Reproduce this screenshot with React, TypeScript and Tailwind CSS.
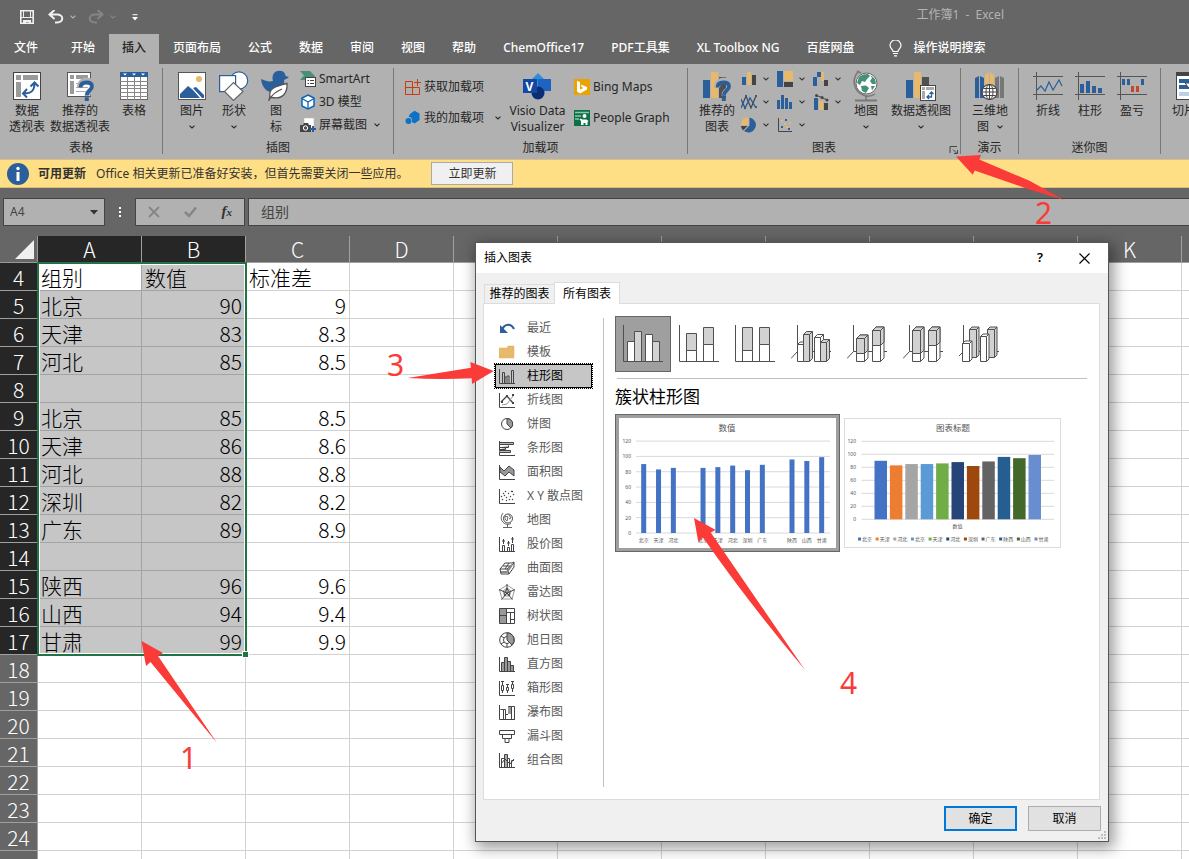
import React from "react";

const INK = "#444";
const BLUE = "#2b5f9b";
const GOLD = "#e6b96c";

/* ---------- shared pieces ---------- */

function Chevron({ className = "" }: { className?: string }) {
  return (
    <svg className={className} width="6" height="4" viewBox="0 0 6 4" fill="none" stroke="currentColor" strokeWidth="1.1">
      <path d="M.5 .7 L3 3 L5.500 .7" />
    </svg>
  );
}

function Art({ w, h, children }: { w: number; h: number; children: React.ReactNode }) {
  return (
    <svg width={w} height={h} viewBox={`0 0 ${w} ${h}`} fill="none" className="shrink-0">
      {children}
    </svg>
  );
}

function BigButton({
  icon,
  lines,
  width,
  chevron = false,
}: {
  icon: React.ReactNode;
  lines: React.ReactNode[];
  width: string;
  chevron?: boolean;
}) {
  return (
    <button type="button" className={`flex shrink-0 flex-col items-center text-[#262626] ${width}`}>
      <span className="mb-px flex h-8 items-center justify-center">{icon}</span>
      {lines.map((l, i) => (
        <span key={i} className="flex h-4 items-center whitespace-nowrap leading-4">
          {l}
        </span>
      ))}
      {chevron && <Chevron className="mt-1.5" />}
    </button>
  );
}

function SmallButton({ icon, label, chevron }: { icon: React.ReactNode; label: string; chevron?: string }) {
  return (
    <button type="button" className="flex items-center gap-[3px] whitespace-nowrap text-[#262626]">
      {icon}
      <span>{label}</span>
      {chevron && <Chevron className={chevron} />}
    </button>
  );
}

function Group({
  label,
  width,
  children,
  pad = "",
  launcher = false,
}: {
  label: string;
  width: string;
  children: React.ReactNode;
  pad?: string;
  launcher?: boolean;
}) {
  return (
    <section aria-label={label || undefined} className={`flex shrink-0 pt-1 pb-[3px] ${width}`}>
      <div className="flex min-w-0 flex-1 flex-col">
        <div className={`flex flex-1 pt-0.5 ${pad}`}>{children}</div>
        <div className="relative flex h-4 items-center justify-center leading-4 text-[#262626]">
          {label}
          {launcher && (
            <button type="button" aria-label="图表选项" className="absolute right-0.5 bottom-0.5">
              <Art w={9} h={9}>
                <path d="M1 8 V1.500 H8 M4 4.500 L8 8.500 M8.500 5 V8.500 H5" stroke={INK} />
              </Art>
            </button>
          )}
        </div>
      </div>
      <div className="mb-0.5 w-px bg-[#777]" />
    </section>
  );
}

/* ---------- ribbon artwork ---------- */

function HelpMark() {
  return (
    <g>
      <path d="M15 16.500 C15 11 19 9.500 22 9.500 C26 9.500 28 12 28 15 C28 20 22.500 19.500 22.500 24.500" stroke="#b1b1b1" strokeWidth="6" />
      <path d="M15.500 16.500 C15.500 12.500 18.500 11.500 21.500 11.500 C25 11.500 27 13 27 15.500 C27 19.500 21.800 20 21.800 24.500" stroke={BLUE} strokeWidth="3.800" />
      <rect x="19.800" y="26.200" width="4" height="3.800" fill={BLUE} />
    </g>
  );
}

const PivotIcon = (
  <Art w={28} h={28}>
    <rect x=".5" y=".5" width="27" height="27" fill="#fff" stroke={INK} />
    <path d="M3 3h5v5H3zM10 3h15v5H10zM3 10h5v15H3z" fill="#9a9a9a" />
    <path d="M11 21.500 C19 21.500 21.500 18 21.500 11.500 M17.500 14.500 L21.500 10.500 L25.500 14.500 M14 17 L10 21.500 L14 25.500" stroke={BLUE} strokeWidth="2" />
  </Art>
);

const RecPivotIcon = (
  <Art w={30} h={30}>
    <rect x="2.500" y="1.500" width="23" height="24" fill="#fff" stroke="#555" />
    <path d="M5 4h4v4H5zM11 4h12v4H11zM5 10h4v13H5z" fill="#9a9a9a" />
    <path d="M11 12.500H23M11 16.500H23M11 20.500H23" stroke="#aaa" />
    <HelpMark />
  </Art>
);

const TableIcon = (
  <Art w={28} h={28}>
    <rect x=".5" y=".5" width="27" height="27" fill="#fff" stroke="#666" />
    <rect width="28" height="5" fill={BLUE} />
    <path d="M3 1.500h4l-2 2zM12 1.500h4l-2 2zM21 1.500h4l-2 2z" fill="#fff" />
    <path d="M0 9.500H28M0 13.500H28M0 16.500H28M0 20.500H28M0 24.500H28M7.500 5V28M14.500 5V28M20.500 5V28" stroke="#888" />
  </Art>
);

const PictureIcon = (
  <Art w={28} h={28}>
    <rect x=".5" y=".5" width="27" height="27" fill="#fff" stroke="#555" />
    <circle cx="21" cy="7" r="3" fill={GOLD} />
    <path d="M2 26 V22 L10 14 L15 18 L22 26z M15 16 L18 15 L26 23 V26 H24z" fill={BLUE} />
  </Art>
);

const ShapesIcon = (
  <Art w={30} h={30}>
    <circle cx="20" cy="9.500" r="8.700" fill="#fff" stroke={BLUE} strokeWidth="1.200" />
    <rect x=".6" y="4.600" width="16" height="16" fill="#fff" stroke={BLUE} strokeWidth="1.200" />
    <path d="M14.500 11.500 L24 20.500 L14.500 29.500 L5.500 20.500z" fill="#fff" stroke="#666" strokeWidth="1.200" />
  </Art>
);

const DuckIcon = (
  <Art w={30} h={32}>
    <path d="M0 9 C5 11 8 12 12 11 C11 8 11 1 18.500 .8 C23 .6 24.500 4 24.500 6 L28 7 C26 9 24 9 23 10 C24 13 22 20 15 22 C8 24 1 19 0 9z" fill={BLUE} />
    <path d="M8 31 C8 27 10 25 12 24" stroke="#555" strokeWidth="1.300" />
    <path d="M9 27 C7 19 14 16 26 13.500 C26.500 21 23 30 11 27.500z" fill="#fff" stroke="#555" strokeWidth="1.300" />
    <path d="M9 29 C12 23 16 21 21 19" stroke="#555" strokeWidth="1.200" />
  </Art>
);

const SmartArtIcon = (
  <Art w={16} h={16}>
    <path d="M0 0H10L15 5L12 9H0L4 4.500z" fill="#4a8f78" />
    <rect x="5.500" y="6.500" width="10" height="9" fill="#fff" stroke={INK} />
    <path d="M7.500 9.500H9M7.500 12.500H9M10 9.500H14M10 12.500H14" stroke={INK} />
  </Art>
);

const CubeIcon = (
  <Art w={16} h={16}>
    <path d="M8 1 L14 4 V12 L8 15 L2 12 V4z" fill="#fff" stroke="#0b66b4" strokeWidth="1.500" />
    <path d="M2 4.500 L8 8 L14 4.500 M8 8 V15" stroke="#0b66b4" strokeWidth="1.300" />
  </Art>
);

const ScreenshotIcon = (
  <Art w={16} h={16}>
    <rect x="4.500" y="1.500" width="9" height="9" fill="#fff" stroke="#fff" strokeDasharray="1 1" />
    <path d="M0 8h3l1-2h4l1 2h2v7H0z" fill={INK} />
    <circle cx="5.500" cy="11" r="2.200" stroke="#fff" fill="#555" />
    <path d="M13 9v6M10 12h6" stroke={BLUE} strokeWidth="2" />
  </Art>
);

const StoreIcon = (
  <Art w={16} h={16}>
    <path d="M.5 2.500H7.500V15.500H.5zM.5 8.500H14.500V15.500H.5M7.500 8.500V15.500M12.500 0V7M9 3.500H16" stroke="#cc3a0d" />
  </Art>
);

const MyAddinsIcon = (
  <Art w={16} h={16}>
    <path d="M5 4 L9.500 .8 L14.500 3.500 V10 L9.500 13.500 L7 12 C7.500 8 6 7 3.500 7z" fill="#0c72c6" />
    <circle cx="3.500" cy="11" r="3" fill="#0c72c6" />
  </Art>
);

const VisioIcon = (
  <Art w={29} h={28}>
    <path d="M15 1 L22 8 L15 15 L8 8z" fill="#2f8bdc" />
    <rect x="15" y="7" width="13" height="12" fill="#1e63c0" />
    <circle cx="15" cy="21" r="6.500" fill="#0a2d74" />
    <rect x="0" y="7" width="14" height="14" fill="#1447a4" />
    <text x="2.500" y="18.500" fontSize="12" fontWeight="700" fill="#fff">V</text>
  </Art>
);

const BingIcon = (
  <Art w={16} h={16}>
    <rect width="16" height="16" fill="#eaa300" />
    <path d="M3 2 L6 3 V10.500 L9.500 9 L7.500 8 L6.800 5.500 L13 8 V10.500 L6 14.500 L3 12.500z" fill="#fff" />
  </Art>
);

const PeopleIcon = (
  <Art w={16} h={16}>
    <rect width="16" height="16" fill="#0b7146" />
    <path d="M1 2.500H15M1 6H7M1 9H5" stroke="#8cc5aa" strokeWidth="1.500" />
    <circle cx="10.500" cy="6" r="2" fill="#fff" />
    <path d="M7 15V11L5.500 9.500 6.500 8.500 8.500 9.500H12.500L14.500 11 13.500 12V15H11.500V13H9.500V15z" fill="#fff" />
  </Art>
);

const RecChartIcon = (
  <Art w={30} h={30}>
    <rect x="1" y="9" width="7" height="18" fill={BLUE} />
    <rect x="9" y="1" width="7" height="26" fill={GOLD} />
    <rect x="17" y="6" width="7" height="21" fill="#505050" />
    <HelpMark />
  </Art>
);

const miniCharts: React.ReactNode[] = [
  <Art w={16} h={16}>
    <path d="M1 6h4v8H1z" fill={BLUE} />
    <path d="M6 1h4v13H6z" fill={GOLD} />
    <path d="M11 4h4v10h-4z" fill={INK} />
  </Art>,
  <Art w={16} h={16}>
    <path d="M0 0h6v16H0z" fill={BLUE} />
    <path d="M7 0h9v10H7z" fill={GOLD} />
    <path d="M7 11h9v5H7z" fill={INK} />
  </Art>,
  <Art w={16} h={16}>
    <path d="M0 6h4v-5h4v5H4v9H0z" fill={BLUE} />
    <path d="M8 1h3v9H8z" fill={GOLD} />
    <path d="M11 9h4v6h-4z" fill={INK} />
  </Art>,
  <Art w={16} h={16}>
    <path d="M0 14 L5 2 L10 14 L15 2" stroke={INK} strokeWidth="1.200" />
    <path d="M0 5 L4 14 L9 4 L12 9 L15 14" stroke={BLUE} strokeWidth="1.400" />
    <path d="M-1 12h2v2h-2zM4 1h2v2H4zM3 13h2v2H3zM14 1h2v2h-2zM14 12h2v2h-2z" fill={BLUE} />
  </Art>,
  <Art w={16} h={16}>
    <path d="M0 6h3v9H0zM4 1h3v14H4zM8 4h3v11H8zM12 8h3v7h-3z" fill={BLUE} />
  </Art>,
  <Art w={16} h={16}>
    <path d="M1 4h4v12H1z" fill={BLUE} />
    <path d="M6 7h4v9H6z" fill={GOLD} />
    <path d="M11 9h4v7h-4z" fill={INK} />
    <path d="M3.500 1.500 L9 3.500 L14 6" stroke={INK} />
    <circle cx="3.500" cy="1.500" r="1.500" fill={INK} />
    <circle cx="9" cy="3.500" r="1.500" fill={INK} />
    <circle cx="14" cy="6" r="1.500" fill={INK} />
  </Art>,
  <Art w={16} h={16}>
    <path d="M7.500 8 V0 A7.500 7.500 0 0 0 0 8z" fill={GOLD} />
    <path d="M6.500 9 H0 A7.500 7.500 0 0 0 2 13.500z" fill={INK} />
    <path d="M8.500 .5 A7.500 7.500 0 1 1 3 14 L8.500 8.500z" fill={BLUE} />
  </Art>,
  <Art w={16} h={16}>
    <path d="M1.500 1V14.500H15" stroke={INK} />
    <path d="M4 9h2v2H4zM8 2h2v2H8zM11 11h2v2h-2z" fill={BLUE} />
    <path d="M4 3h2v2H4zM7 6h2v2H7zM12 5h2v2h-2zM9 9h2v2H9z" fill={GOLD} />
  </Art>,
];

const GlobeIcon = (
  <Art w={26} h={32}>
    <circle cx="13.500" cy="13.500" r="10.500" fill="#fff" stroke="#666" />
    <path d="M6 7 L10 4.500 L15 4 L17 6 L14 9 L12 12 L9 11 L7 15 L4 13zM17 4.500 L22 9 L23 14 L19 14 L17 11 L19 8zM8 16 L13 15.500 L16 18 L13 23 L9 21zM18 16 L22 16 L19 20.500z" fill="#45907a" />
    <path d="M5 2 C-2 10 1 22 11 25.500 C15 27 19 26 22 24 M13 26 V30 M4 1 L8 3" stroke="#777" strokeWidth="1.500" />
    <path d="M2 30.500H24" stroke="#777" strokeWidth="2" />
  </Art>
);

const PivotChartIcon = (
  <Art w={30} h={30}>
    <rect x="0" y="9" width="7" height="18" fill={BLUE} />
    <rect x="8" y="1" width="7" height="26" fill={GOLD} />
    <rect x="16" y="6" width="7" height="9" fill="#505050" />
    <rect x="14.500" y="14.500" width="15" height="15" fill="#fff" stroke={INK} />
    <path d="M16 16h3v3h-3zM20 16h8v3h-8zM16 20h3v8h-3z" fill="#aaa" />
    <path d="M21 26 H25.500 V21 M23.500 23 L25.500 21 L27.500 23 M23 24 L21 26 L23 28" stroke={BLUE} strokeWidth="1.300" />
  </Art>
);

const Map3dIcon = (
  <Art w={30} h={30}>
    <path d="M0 7 L4 5 V27 H0zM5 5 L9 7 V27 H5z" fill={BLUE} />
    <path d="M10 4 L14 1 V25 H10zM15 1 L19 4 V25 H15z" fill={GOLD} />
    <path d="M20 7 L24 5 V27 H20zM25 5 L29 7 V27 H25z" fill="#777" />
    <circle cx="14.500" cy="21" r="7.500" fill="#fff" stroke={INK} strokeWidth="1.200" />
    <ellipse cx="14.500" cy="21" rx="3.500" ry="7.500" stroke={INK} />
    <path d="M14.500 13.500V28.500M7 21H22M8.500 17.500H20.500M8.500 24.500H20.500" stroke={INK} />
  </Art>
);

function SparkFrame({ children }: { children: React.ReactNode }) {
  return (
    <Art w={30} h={28}>
      <path d="M0 4.500H30M0 22.500H30M3.500 0V28" stroke="#555" />
      {children}
    </Art>
  );
}

const SlicerIcon = (
  <Art w={28} h={28}>
    <rect x=".5" y=".5" width="27" height="27" fill="#fff" stroke={INK} />
    <path d="M0 0h28v4H0z" fill={INK} />
    <path d="M3 7h22v4H3z" fill={BLUE} />
    <path d="M3 13h22v4H3z" fill={BLUE} />
    <path d="M3 20h22v4H3z" fill="#bcd0e8" />
    <path d="M9 11h16l-6 8v6l-4-2v-4z" fill="#fff" stroke={INK} />
  </Art>
);

/* ---------- title bar and tabs ---------- */

function TitleBar() {
  return (
    <header className="flex h-[34px] items-center text-[#b4b4b4]">
      <div className="flex items-center pl-5">
        <button type="button" aria-label="保存">
          <Art w={14} h={14}>
            <path d="M.8 .8H13.200V13.200H.8z" stroke="#f0f0f0" strokeWidth="1.600" />
            <path d="M1 7.500H13M3.500 1V7M10.500 1V7" stroke="#f0f0f0" />
            <path d="M3 10H11V14H9V12H6V14H3z" fill="#f0f0f0" />
          </Art>
        </button>
        <button type="button" aria-label="撤消" className="ml-3.5 flex items-center gap-1.5">
          <Art w={16} h={14}>
            <path d="M6.500 0 L1.500 4.500 L6.500 9 M2 4.500 H9 C16 4.500 16 12.500 9 12.500 H7" stroke="#f0f0f0" strokeWidth="2" />
          </Art>
          <Chevron />
        </button>
        <button type="button" aria-label="恢复" className="ml-3 flex items-center gap-1.5 text-[#858585]">
          <Art w={16} h={14}>
            <path d="M9.500 0 L14.500 4.500 L9.500 9 M14 4.500 H7 C0 4.500 0 12.500 7 12.500 H9" stroke="#858585" strokeWidth="2" />
          </Art>
          <Chevron />
        </button>
        <button type="button" aria-label="自定义快速访问工具栏" className="ml-4">
          <Art w={6} h={7}>
            <path d="M.5 .7H5.500" stroke="#fff" />
            <path d="M0 3H6L3 6.500z" fill="#fff" />
          </Art>
        </button>
      </div>
      <h1 className="mr-[185px] mb-1 ml-auto whitespace-pre">工作簿1  -  Excel</h1>
    </header>
  );
}

const tabs = ["开始", "插入", "页面布局", "公式", "数据", "审阅", "视图", "帮助", "ChemOffice17", "PDF工具集", "XL Toolbox NG", "百度网盘"];

function TabRow() {
  return (
    <nav className="flex h-[30px] gap-px whitespace-nowrap font-medium text-white">
      <button type="button" className="w-[57px] shrink-0 pb-0.5 pl-3.5 text-left">文件</button>
      {tabs.map((t) => (
        <button
          key={t}
          type="button"
          className={t === "插入" ? "shrink-0 bg-[#b1b1b1] px-[13px] pb-0.5 text-[#262626]" : "shrink-0 px-[13px] pb-0.5"}
        >
          {t}
        </button>
      ))}
      <button type="button" className="ml-5 flex items-center gap-3 pb-0.5">
        <Art w={13} h={17}>
          <path d="M4 11.500 C4 9 1 8.500 1 5.500 A5.300 5.300 0 0 1 12 5.500 C12 8.500 9 9 9 11.500z M4 13.500H9M5 15.800H8" stroke="#fff" strokeWidth="1.200" />
        </Art>
        操作说明搜索
      </button>
    </nav>
  );
}

/* ---------- ribbon ---------- */

function Ribbon() {
  return (
    <div className="flex h-[95px] shrink-0 overflow-hidden bg-[#b1b1b1]">
      <Group label="表格" width="w-[163px]" pad="pl-1">
        <BigButton width="w-[46px]" icon={PivotIcon} lines={["数据", "透视表"]} />
        <BigButton width="w-[60px]" icon={RecPivotIcon} lines={["推荐的", "数据透视表"]} />
        <BigButton width="w-12" icon={TableIcon} lines={["表格"]} />
      </Group>
      <Group label="插图" width="w-[231px]" pad="pl-2">
        <BigButton width="w-[42px]" icon={PictureIcon} lines={["图片"]} chevron />
        <BigButton width="w-[42px]" icon={ShapesIcon} lines={["形状"]} chevron />
        <BigButton width="w-[42px]" icon={DuckIcon} lines={["图", "标"]} />
        <div className="flex flex-col gap-[7px] pt-px pl-[3px] leading-4">
          <SmallButton icon={SmartArtIcon} label="SmartArt" />
          <SmallButton icon={CubeIcon} label="3D 模型" />
          <SmallButton icon={ScreenshotIcon} label="屏幕截图" chevron="ml-1" />
        </div>
      </Group>
      <Group label="加载项" width="w-[294px]" pad="pl-[11px]">
        <div className="flex w-24 flex-col gap-[15px] pt-[9px] leading-4">
          <SmallButton icon={StoreIcon} label="获取加载项" />
          <SmallButton icon={MyAddinsIcon} label="我的加载项" chevron="ml-2" />
        </div>
        <BigButton width="w-[73px]" icon={VisioIcon} lines={["Visio Data", "Visualizer"]} />
        <div className="flex flex-col gap-[15px] pt-[9px] leading-4">
          <SmallButton icon={BingIcon} label="Bing Maps" />
          <SmallButton icon={PeopleIcon} label="People Graph" />
        </div>
      </Group>
      <Group label="图表" width="w-[273px]" pad="pl-[9px]" launcher>
        <BigButton width="w-10" icon={RecChartIcon} lines={["推荐的", "图表"]} />
        <div className="grid h-min grid-cols-3 gap-x-2 gap-y-[7px] pt-px pl-1">
          {miniCharts.map((c, i) => (
            <button key={i} type="button" aria-label="插入图表" className="flex h-4 w-7 items-center justify-between text-[#333]">
              {c}
              <Chevron />
            </button>
          ))}
        </div>
        <BigButton width="w-[50px]" icon={GlobeIcon} lines={["地图"]} chevron />
        <BigButton width="w-[60px]" icon={PivotChartIcon} lines={["数据透视图"]} chevron />
      </Group>
      <Group label="演示" width="w-[58px]" pad="pl-2">
        <BigButton
          width="w-[42px]"
          icon={Map3dIcon}
          lines={[
            "三维地",
            <>
              图<Chevron className="ml-2" />
            </>,
          ]}
        />
      </Group>
      <Group label="迷你图" width="w-[142px]" pad="pl-2">
        <BigButton
          width="w-[42px]"
          icon={
            <SparkFrame>
              <path d="M4 18 L8 14 L12 19 L16 10 L20 18 L26 8 L29 14" stroke={BLUE} strokeWidth="1.200" />
            </SparkFrame>
          }
          lines={["折线"]}
        />
        <BigButton
          width="w-[42px]"
          icon={
            <SparkFrame>
              <path d="M5 12h4v9H5zM11 9h4v12h-4zM17 14h4v7h-4zM23 16h4v5h-4z" fill={BLUE} />
            </SparkFrame>
          }
          lines={["柱形"]}
        />
        <BigButton
          width="w-[42px]"
          icon={
            <SparkFrame>
              <path d="M5 7h3v6H5zM10 7h3v6h-3zM24 7h3v6h-3z" fill={BLUE} />
              <path d="M14 14h3v6h-3zM19 14h3v6h-3z" fill="#c4472b" />
            </SparkFrame>
          }
          lines={["盈亏"]}
        />
      </Group>
      <Group label="" width="w-[120px]" pad="pl-[7px]">
        <BigButton width="w-11" icon={SlicerIcon} lines={["切片器"]} />
      </Group>
    </div>
  );
}

/* ---------- message and formula bars ---------- */

function UpdateBar() {
  return (
    <div role="status" className="flex h-[29px] shrink-0 items-center border-y border-[#d9bd83] bg-[#ffdf86] pl-[7px] text-[#333]">
      <Art w={22} h={22}>
        <circle cx="11" cy="11" r="11" fill={BLUE} />
        <circle cx="11" cy="5.500" r="1.700" fill="#fff" />
        <path d="M9.500 9h3v9h-3z" fill="#fff" />
      </Art>
      <strong className="ml-[9px]">可用更新</strong>
      <span className="ml-2.5">Office 相关更新已准备好安装，但首先需要关闭一些应用。</span>
      <button type="button" className="ml-[23px] h-[23px] w-[82px] border border-[#aaa] bg-[#f0f0f0]">
        立即更新
      </button>
    </div>
  );
}

function FormulaBar() {
  return (
    <div className="flex h-12 shrink-0 items-start pt-2.5 pl-[3px]">
      <div className="flex h-7 w-[102px] shrink-0 items-center border border-[#444] bg-[#b1b1b1] pr-1.5 pl-1.5">
        <input aria-label="名称框" defaultValue="A4" className="w-full min-w-0 bg-transparent text-[#444] outline-none" />
        <Art w={8} h={5}>
          <path d="M0 0H8L4 4.500z" fill="#333" />
        </Art>
      </div>
      <div className="flex h-7 w-[30px] shrink-0 items-center justify-center">
        <Art w={3} h={11}>
          <path d="M0 0h2v2H0zM0 4h2v2H0zM0 8h2v2H0z" fill="#fff" />
        </Art>
      </div>
      <div className="flex h-7 w-[110px] shrink-0 items-center justify-around border border-[#444] bg-[#b1b1b1]">
        <button type="button" aria-label="取消输入">
          <Art w={12} h={12}>
            <path d="M1 1 L11 11 M11 1 L1 11" stroke="#858585" strokeWidth="1.800" />
          </Art>
        </button>
        <button type="button" aria-label="输入">
          <Art w={13} h={12}>
            <path d="M1 6 L5 10 L12 1.500" stroke="#858585" strokeWidth="2.500" />
          </Art>
        </button>
        <button type="button" aria-label="插入函数" className="font-['Liberation_Serif',serif] text-[15px] font-bold text-[#333] italic">
          f<span className="text-[11px]">x</span>
        </button>
      </div>
      <input
        aria-label="编辑栏"
        defaultValue="组别"
        className="ml-[3px] h-7 min-w-0 flex-1 border border-r-0 border-[#444] bg-[#b1b1b1] pb-0.5 pl-3 text-sm text-[#444] outline-none"
      />
    </div>
  );
}

/* ---------- worksheet ---------- */

const columns = ["A", "B", "C", "D", "E", "F", "G", "H", "I", "J", "K", "L"];

const cells: Record<number, [string, string, string]> = {
  4: ["组别", "数值", "标准差"],
  5: ["北京", "90", "9"],
  6: ["天津", "83", "8.3"],
  7: ["河北", "85", "8.5"],
  9: ["北京", "85", "8.5"],
  10: ["天津", "86", "8.6"],
  11: ["河北", "88", "8.8"],
  12: ["深圳", "82", "8.2"],
  13: ["广东", "89", "8.9"],
  15: ["陕西", "96", "9.6"],
  16: ["山西", "94", "9.4"],
  17: ["甘肃", "99", "9.9"],
};

const rows = Array.from({ length: 22 }, (_, i) => i + 4);

function cellClass(row: number, col: number) {
  const base = "h-7 overflow-hidden border-r border-b px-[3px] py-0 whitespace-nowrap";
  const align = row > 4 && col > 0 ? "text-right" : "text-left";
  if (row <= 17 && col < 2) {
    const active = row === 4 && col === 0;
    return `${base} ${align} border-[#a3a3a3] ${active ? "bg-white" : "bg-[#c6c6c6]"}`;
  }
  return `${base} ${align} border-[#d2d2d2] bg-white`;
}

function Sheet() {
  return (
    <div className="relative min-h-0 flex-1 overflow-hidden bg-white">
      <table className="w-[1286px] table-fixed border-separate border-spacing-0 font-['Noto_Sans_CJK_SC',sans-serif] text-[21px] leading-6 font-light text-black">
        <thead>
          <tr>
            <th className="h-[27px] w-[38px] border-r border-b border-[#999] bg-[#666] p-0">
              <span className="flex justify-end pr-[3px]">
                <Art w={19} h={19}>
                  <path d="M19 0V19H0z" fill="#f0f0f0" />
                </Art>
              </span>
            </th>
            {columns.map((c, i) => (
              <th
                key={c}
                scope="col"
                className={
                  i < 2
                    ? "h-[27px] w-[104px] border-r border-b border-[#a0a0a0] bg-[#262626] p-0 font-light text-white"
                    : "h-[27px] w-[104px] border-r border-b border-[#a0a0a0] bg-[#666] p-0 font-light text-white"
                }
              >
                {c}
              </th>
            ))}
          </tr>
        </thead>
        <tbody>
          {rows.map((r) => (
            <tr key={r}>
              <th
                scope="row"
                className={
                  r <= 17
                    ? "h-7 border-r border-b border-[#a0a0a0] bg-[#262626] p-0 font-light text-white"
                    : "h-7 border-r border-b border-[#a0a0a0] bg-[#666] p-0 font-light text-white"
                }
              >
                {r}
              </th>
              {columns.map((c, i) => (
                <td key={c} className={cellClass(r, i)}>
                  {cells[r]?.[i] ?? ""}
                </td>
              ))}
            </tr>
          ))}
        </tbody>
      </table>
      <div className="pointer-events-none absolute top-[26px] left-[37px] h-[394px] w-[210px] border-2 border-[#217346] shadow-[inset_0_0_0_1px_#fff]">
        <span className="absolute -right-1 -bottom-1 size-[7px] border border-white bg-[#217346]" />
      </div>
    </div>
  );
}

/* ---------- dialog: category list ---------- */

function Axis() {
  return <path d="M.5 1V15.500H16" stroke={INK} />;
}

const kinds: { name: string; art: React.ReactNode }[] = [
  {
    name: "最近",
    art: (
      <>
        <path d="M3 9.500 C6 3.500 12 3 15 9" stroke={BLUE} strokeWidth="2.200" />
        <path d="M1 5V13H9L1 5z" fill={BLUE} />
      </>
    ),
  },
  { name: "模板", art: <path d="M0 4H8L9 2H15V14H0z M9.500 3.500H14" fill={GOLD} stroke="#e0b06a" strokeWidth=".5" /> },
  {
    name: "柱形图",
    art: (
      <>
        <Axis />
        <path d="M3.500 15V4.500H5.500V15M8 15V8H10V15M12.500 15V2.500H14.500V15M6 15V9H7.500" stroke={INK} />
      </>
    ),
  },
  {
    name: "折线图",
    art: (
      <>
        <Axis />
        <path d="M2 10 L8 4 L14 11" stroke={INK} strokeWidth="1.300" />
        <path d="M3 13 L8 12 L14 4" stroke="#999" />
        <path d="M7 3h2v2H7zM13 10h2v2h-2zM13 2h2v2h-2zM2 9h2v2H2z" fill={INK} />
      </>
    ),
  },
  {
    name: "饼图",
    art: (
      <>
        <circle cx="8" cy="8" r="5.500" fill="#fff" stroke={INK} />
        <path d="M8 8V2.500A5.500 5.500 0 0 1 12 12z" fill="#999" stroke={INK} />
      </>
    ),
  },
  {
    name: "条形图",
    art: (
      <>
        <Axis />
        <path d="M.5 2.500H14.500V4.500H.5zM.5 7.500H9.500V5.500M.5 9.500H6.500V7.500M.5 12.500H11.500V10.500H.5" fill="#bbb" stroke={INK} />
      </>
    ),
  },
  {
    name: "面积图",
    art: (
      <>
        <path d="M1 3 L5 7 L10 2 L15 6 V12 L10 8 L6 12 L1 8z" fill="#999" stroke={INK} />
        <Axis />
      </>
    ),
  },
  {
    name: "X Y 散点图",
    art: (
      <>
        <Axis />
        <path d="M3 11h1v1H3zM5 7h1v1H5zM7 9h1v1H7zM9 5h1v1H9zM12 3h2v1h-2zM4 5h1v1H4zM7 12h1v1H7zM11 8h1v1h-1zM13 11h1v1h-1zM10 11h1v1h-1zM14 6h1v1h-1zM6 3h1v1H6zM2 8h1v1H2z" fill={INK} stroke={INK} strokeWidth=".3" />
      </>
    ),
  },
  {
    name: "地图",
    art: (
      <>
        <circle cx="9" cy="6.500" r="4.500" stroke={INK} />
        <path d="M4 1 C0 6 3 12 9 12.500 L12 11.500M8.500 12.500V15M4 15.500H13M6 4 L9 5 L8 9 L6 7zM10 3 L12 6 L10 7" stroke="#666" />
      </>
    ),
  },
  {
    name: "股价图",
    art: (
      <>
        <Axis />
        <path d="M3.500 15V9.500H5.500V15M8.500 15V11.500H10.500V15M12.500 15V8.500H14.500V15M4.500 3V8M9.500 5V10M13.500 1V7M3 5H6M8 7H11M12 3H15" stroke={INK} />
      </>
    ),
  },
  {
    name: "曲面图",
    art: (
      <>
        <path d="M1 9 L6 3 H13 L15 2 V7 L10 14 H2z M1 9H8L15 3M4 6H11M8 9L10 14M6 9L10 3" stroke={INK} />
        <path d="M2 12H8L13 5" stroke="#888" strokeWidth="2" />
      </>
    ),
  },
  {
    name: "雷达图",
    art: (
      <>
        <path d="M8 1 L15.500 6 L13 15 H3 L.5 6z M8 4 L12 7 L10.500 12 H5.500 L4 7z" stroke="#999" />
        <path d="M8 0V9M8 9L16 5.500M8 9L13.500 15.500M8 9L2.500 15.500M8 9L0 5.500M8 4 L10.500 8.500 L10 12 L8 9 L5.500 12 L6 8z" stroke={INK} />
      </>
    ),
  },
  {
    name: "树状图",
    art: (
      <>
        <path d="M.5 .5h7v15h-7z" fill="#999" />
        <path d="M.5 .5H15.500V15.500H.5zM7.500 .5V15.500M.5 7.500H7.500M7.500 4.500H15.500M11.500 4.500V15.500M11.500 11.500H15.500" stroke={INK} />
      </>
    ),
  },
  {
    name: "旭日图",
    art: (
      <>
        <circle cx="8" cy="8" r="7.300" stroke={INK} />
        <circle cx="8" cy="8" r="3.500" stroke={INK} />
        <path d="M8 1 A7 7 0 0 1 13 13 L8 8z" fill="#999" stroke={INK} />
        <path d="M2 4L5 6M2 12L5 10M8 11.500V15" stroke={INK} />
      </>
    ),
  },
  {
    name: "直方图",
    art: (
      <>
        <path d="M2.500 15V6.500H5.500V15M5.500 15V1.500H8.500V15M8.500 15V5.500H11.500V15M11.500 15V9.500H14.500V15" fill="#999" stroke={INK} />
        <Axis />
      </>
    ),
  },
  {
    name: "箱形图",
    art: (
      <>
        <Axis />
        <path d="M2.500 5.500h2v5h-2zM7.500 7.500h2v3h-2zM12.500 4.500h2v4h-2zM3.500 1V6M3.500 10V13M8.500 4V7M8.500 11V13M13.500 1V4M13.500 9V12M2 1.500H5M12 1.500H15M7 4.500H10" stroke={INK} />
      </>
    ),
  },
  {
    name: "瀑布图",
    art: (
      <>
        <path d="M9 2h3v8H9z" fill="#999" />
        <Axis />
        <path d="M1.500 5.500H4.500V15M4.500 5.500H6.500V10.500H9M12.500 15V2.500H15.500V15M6.500 9V15M9.500 2.500H12.500" stroke={INK} />
      </>
    ),
  },
  { name: "漏斗图", art: <path d="M.5 2.500H15.500V6.500H.5zM3.500 6.500V10.500H12.500V6.500M6 10.500V14.500H10V10.500" stroke={INK} /> },
  {
    name: "组合图",
    art: (
      <>
        <path d="M5.500 15V2.500H8.500V15" fill="#aaa" />
        <Axis />
        <path d="M2.500 15V6.500H5.500M5.500 15V2.500H8.500V15M8.500 6.500H10.500V15M12.500 15V8.500H15M2 12L6 7L11 12L15 7" stroke={INK} />
      </>
    ),
  },
];

function KindList() {
  return (
    <ul className="w-[97px] shrink-0">
      {kinds.map((k) => {
        const on = k.name === "柱形图";
        return (
          <li key={k.name}>
            <button
              type="button"
              aria-pressed={on}
              className={
                on
                  ? "flex h-6 w-full items-center gap-3 border border-black bg-[#c6c6c6] pl-[3px] whitespace-nowrap text-black outline-1 outline-black outline-dotted"
                  : "flex h-6 w-full items-center gap-3 pl-1 whitespace-nowrap text-[#5a5a5a]"
              }
            >
              <Art w={16} h={16}>{k.art}</Art>
              {k.name}
            </button>
          </li>
        );
      })}
    </ul>
  );
}

/* ---------- dialog: sub-types ---------- */

function Prism({ x, y, w, b = 36.5, fill, split, d = 3.5 }: { x: number; y: number; w: number; b?: number; fill: string; split?: number; d?: number }) {
  const r = x + w;
  return (
    <g stroke="#505050">
      <path d={`M${x} ${y} L${x + d} ${y - d} H${r + d} V${b - d} L${r} ${b} H${x}z`} fill={split ? "#fff" : fill} />
      {split && <path d={`M${x} ${y} L${x + d} ${y - d} H${r + d} V${split - d} L${r} ${split} H${x}z`} fill={fill} />}
      <path d={`M${x} ${y} H${r} V${b} M${r} ${y} L${r + d} ${y - d}`} />
    </g>
  );
}

const flatAxis = <path d="M.5 0V36.500H40" stroke="#505050" />;
const deepAxis = <path d="M6.500 0V26.500H40M6.500 26.500L0 33.500" stroke="#505050" />;
const G = "#d2d2d2";

const subTypes: { name: string; art: React.ReactNode }[] = [
  {
    name: "簇状柱形图",
    art: (
      <>
        <g stroke="#505050">
          <path d="M4.500 16.500h7v20h-7zM22.500 9.500h7v27h-7z" fill="#fff" />
          <path d="M11.500 6.500h7v30h-7zM29.500 16.500h7v20h-7z" fill={G} />
        </g>
        {flatAxis}
      </>
    ),
  },
  {
    name: "堆积柱形图",
    art: (
      <>
        <g stroke="#505050">
          <path d="M7.500 25.500h10v11h-10zM24.500 19.500h10v17h-10z" fill="#fff" />
          <path d="M7.500 8.500h10v17h-10zM24.500 2.500h10v17h-10z" fill={G} />
        </g>
        {flatAxis}
      </>
    ),
  },
  {
    name: "百分比堆积柱形图",
    art: (
      <>
        <g stroke="#505050">
          <path d="M7.500 25.500h10v11h-10zM24.500 19.500h10v17h-10z" fill="#fff" />
          <path d="M7.500 2.500h10v23h-10zM24.500 2.500h10v17h-10z" fill={G} />
        </g>
        {flatAxis}
      </>
    ),
  },
  {
    name: "三维簇状柱形图",
    art: (
      <>
        {deepAxis}
        <Prism x={6.5} y={19.5} w={6} fill="#fff" d={2.5} />
        <Prism x={12.5} y={9.5} w={6} fill={G} d={3} />
        <Prism x={23.5} y={12.5} w={6} fill="#fff" d={3} />
        <Prism x={29.5} y={17.5} w={6} fill={G} d={3} />
      </>
    ),
  },
  {
    name: "三维堆积柱形图",
    art: (
      <>
        {deepAxis}
        <Prism x={9.5} y={13.5} w={8} split={28.5} fill={G} />
        <Prism x={25.5} y={5.5} w={8} split={20.5} fill={G} />
      </>
    ),
  },
  {
    name: "三维百分比堆积柱形图",
    art: (
      <>
        {deepAxis}
        <Prism x={9.5} y={5.5} w={8} split={28.5} fill={G} />
        <Prism x={25.5} y={5.5} w={8} split={20.5} fill={G} />
      </>
    ),
  },
  {
    name: "三维柱形图",
    art: (
      <>
        <path d="M4.500 0V26.500H40M4.500 26.500L0 31" stroke="#505050" />
        <Prism x={10.5} y={4.500} w={7} b={32.5} fill={G} d={2.5} />
        <Prism x={3.5} y={18.500} w={7} fill="#fff" d={2.5} />
        <Prism x={28.5} y={4.500} w={7} b={32.5} fill={G} d={2.5} />
        <Prism x={21.5} y={11.500} w={6} fill="#fff" d={2.5} />
      </>
    ),
  },
];

/* ---------- dialog: previews ---------- */

const ticks = [0, 20, 40, 60, 80, 100, 120];
const series1: [string, number][] = [
  ["北京", 90], ["天津", 83], ["河北", 85], ["", 0], ["北京", 85], ["天津", 86], ["河北", 88], ["深圳", 82], ["广东", 89], ["", 0], ["陕西", 96], ["山西", 94], ["甘肃", 99],
];
const series2: [string, number, string][] = [
  ["北京", 90, "#4472c4"], ["天津", 83, "#ed7d31"], ["河北", 85, "#a5a5a5"], ["北京", 85, "#5b9bd5"], ["天津", 86, "#70ad47"], ["河北", 88, "#264478"],
  ["深圳", 82, "#9e480e"], ["广东", 89, "#636363"], ["陕西", 96, "#255e91"], ["山西", 94, "#43682b"], ["甘肃", 99, "#698ed0"],
];

function PreviewOne() {
  return (
    <svg width="217" height="130" viewBox="0 0 217 130" className="block bg-white">
      <text x="108" y="13" textAnchor="middle" fontSize="8.500" fill="#555">数值</text>
      {ticks.map((t) => (
        <g key={t}>
          <path d={`M17 ${115 - t * 0.766}H211`} stroke="#d9d9d9" />
          <text x="12" y={117 - t * 0.766} textAnchor="end" fontSize="5" fill="#555">{t}</text>
        </g>
      ))}
      {series1.map(([n, v], i) => (
        <g key={i}>
          <rect x={22.200 + i * 14.83} y={115 - v * 0.766} width="5" height={v * 0.766} fill="#4472c4" />
          <text x={24.700 + i * 14.83} y="124" textAnchor="middle" fontSize="5" fill="#555">{n}</text>
        </g>
      ))}
    </svg>
  );
}

function PreviewTwo() {
  return (
    <svg width="217" height="130" viewBox="0 0 217 130" className="block bg-white">
      <text x="109" y="13" textAnchor="middle" fontSize="8.500" fill="#555">图表标题</text>
      {ticks.map((t) => (
        <g key={t}>
          <path d={`M17.500 ${101.3 - t * 0.65}H210`} stroke="#d9d9d9" />
          <text x="12" y={103 - t * 0.65} textAnchor="end" fontSize="5" fill="#555">{t}</text>
        </g>
      ))}
      {series2.map(([n, v, c], i) => (
        <g key={i}>
          <rect x={30.5 + i * 15.4} y={101.3 - v * 0.65} width="12.500" height={v * 0.65} fill={c} />
          <rect x={14 + i * 17.65} y="119.500" width="3" height="3" fill={c} />
          <text x={18 + i * 17.65} y="123" fontSize="5" fill="#555">{n}</text>
        </g>
      ))}
      <text x="113.500" y="110" textAnchor="middle" fontSize="5" fill="#555">数值</text>
    </svg>
  );
}

function InsertChartDialog() {
  return (
    <div
      role="dialog"
      aria-label="插入图表"
      className="absolute top-[242px] left-[475px] flex h-[600px] w-[634px] flex-col border border-[#555] bg-[#f0f0f0] text-black shadow-[3px_4px_14px_2px_rgba(0,0,0,0.4)]"
    >
      <div className="flex h-[30px] shrink-0 items-center bg-white pl-2">
        <h2>插入图表</h2>
        <button type="button" aria-label="帮助" className="mr-9 ml-auto text-[13px] font-semibold">?</button>
        <button type="button" aria-label="关闭" className="mr-[18px]">
          <Art w={11} h={11}>
            <path d="M.5 .5 L10.500 10.500 M10.500 .5 L.5 10.500" stroke="#000" strokeWidth="1.200" />
          </Art>
        </button>
      </div>

      <div className="flex h-[30px] shrink-0 items-end pl-2">
        <button type="button" className="h-[19px] w-[71px] border border-b-0 border-[#dcdcdc] leading-[18px] whitespace-nowrap">推荐的图表</button>
        <button type="button" className="relative z-10 -mb-px -ml-px h-[22px] w-[66px] border border-b-0 border-[#dcdcdc] bg-white leading-[18px]">所有图表</button>
      </div>

      <div className="mr-2 ml-[7px] flex min-h-0 flex-1 border border-[#dcdcdc] bg-white pt-3 pl-[11px]">
        <KindList />
        <div className="mt-0.5 mb-3 ml-[11px] w-px shrink-0 bg-[#c0c0c0]" />
        <div className="ml-[11px] min-w-0 flex-1">
          <div className="flex">
            {subTypes.map((s, i) => (
              <button
                key={s.name}
                type="button"
                aria-label={s.name}
                className={
                  i === 0
                    ? "flex size-14 items-center justify-center border border-[#666] bg-[#9f9f9f]"
                    : "flex size-14 items-center justify-center"
                }
              >
                <Art w={40} h={38}>{s.art}</Art>
              </button>
            ))}
          </div>
          <div className="mt-1.5 mr-3 ml-0.5 h-px bg-[#c0c0c0]" />
          <h3 className="mt-1.5 text-[17px] leading-6">簇状柱形图</h3>
          <div className="mt-[5px] flex items-center gap-1">
            <button type="button" aria-label="预览 1" className="border border-[#666] bg-[#9f9f9f] p-[3px]">
              <PreviewOne />
            </button>
            <button type="button" aria-label="预览 2" className="outline-1 -outline-offset-1 outline-[#dcdcdc]">
              <PreviewTwo />
            </button>
          </div>
        </div>
      </div>

      <div className="relative flex h-[41px] shrink-0 items-start justify-end gap-[11px] pt-1.5 pr-[7px]">
        <button type="button" className="h-[25px] w-[73px] border-2 border-[#0078d7] bg-[#e1e1e1]">确定</button>
        <button type="button" className="h-[25px] w-[73px] border border-[#adadad] bg-[#e1e1e1]">取消</button>
        <svg className="absolute right-0.5 bottom-0.5" width="8" height="8" viewBox="0 0 8 8">
          <path d="M6 0h2v2H6zM3 3h2v2H3zM6 3h2v2H6zM0 6h2v2H0zM3 6h2v2H3zM6 6h2v2H6z" fill="#bfbfbf" />
        </svg>
      </div>
    </div>
  );
}

/* ---------- numbered call-outs drawn over the window ---------- */

function Callouts() {
  return (
    <svg className="pointer-events-none absolute top-0 left-0 z-20" width="1189" height="859" viewBox="0 0 1189 859" fill="#fa3b37">
      <path d="M141.500 641 L163 653 L158 656 L217 743 L150.500 662 L146 666z" />
      <path d="M956 156.500 L981 155 L979.300 159.500 L1030 181 L1063.500 199.700 L1028 189 L974.700 170.500 L972.700 174.700z" />
      <path d="M493.700 371 L470.300 362 L471 367.700 L407.700 378 Q440 380 471.700 378.300 L472 384z" />
      <path d="M694 518 L715.700 530 L710.700 532.500 L805 670 Q748 602 703 537.500 L698.300 542z" />
      <g fontSize="30">
        <text x="180" y="769">1</text>
        <text x="1035" y="224">2</text>
        <text x="387" y="376">3</text>
        <text x="840" y="694">4</text>
      </g>
    </svg>
  );
}

export default function App() {
  return (
    <div className="relative flex h-screen w-full flex-col overflow-hidden bg-[#666] font-['Noto_Sans','Noto_Sans_CJK_SC',sans-serif] text-xs">
      <TitleBar />
      <TabRow />
      <Ribbon />
      <UpdateBar />
      <FormulaBar />
      <Sheet />
      <InsertChartDialog />
      <Callouts />
    </div>
  );
}
